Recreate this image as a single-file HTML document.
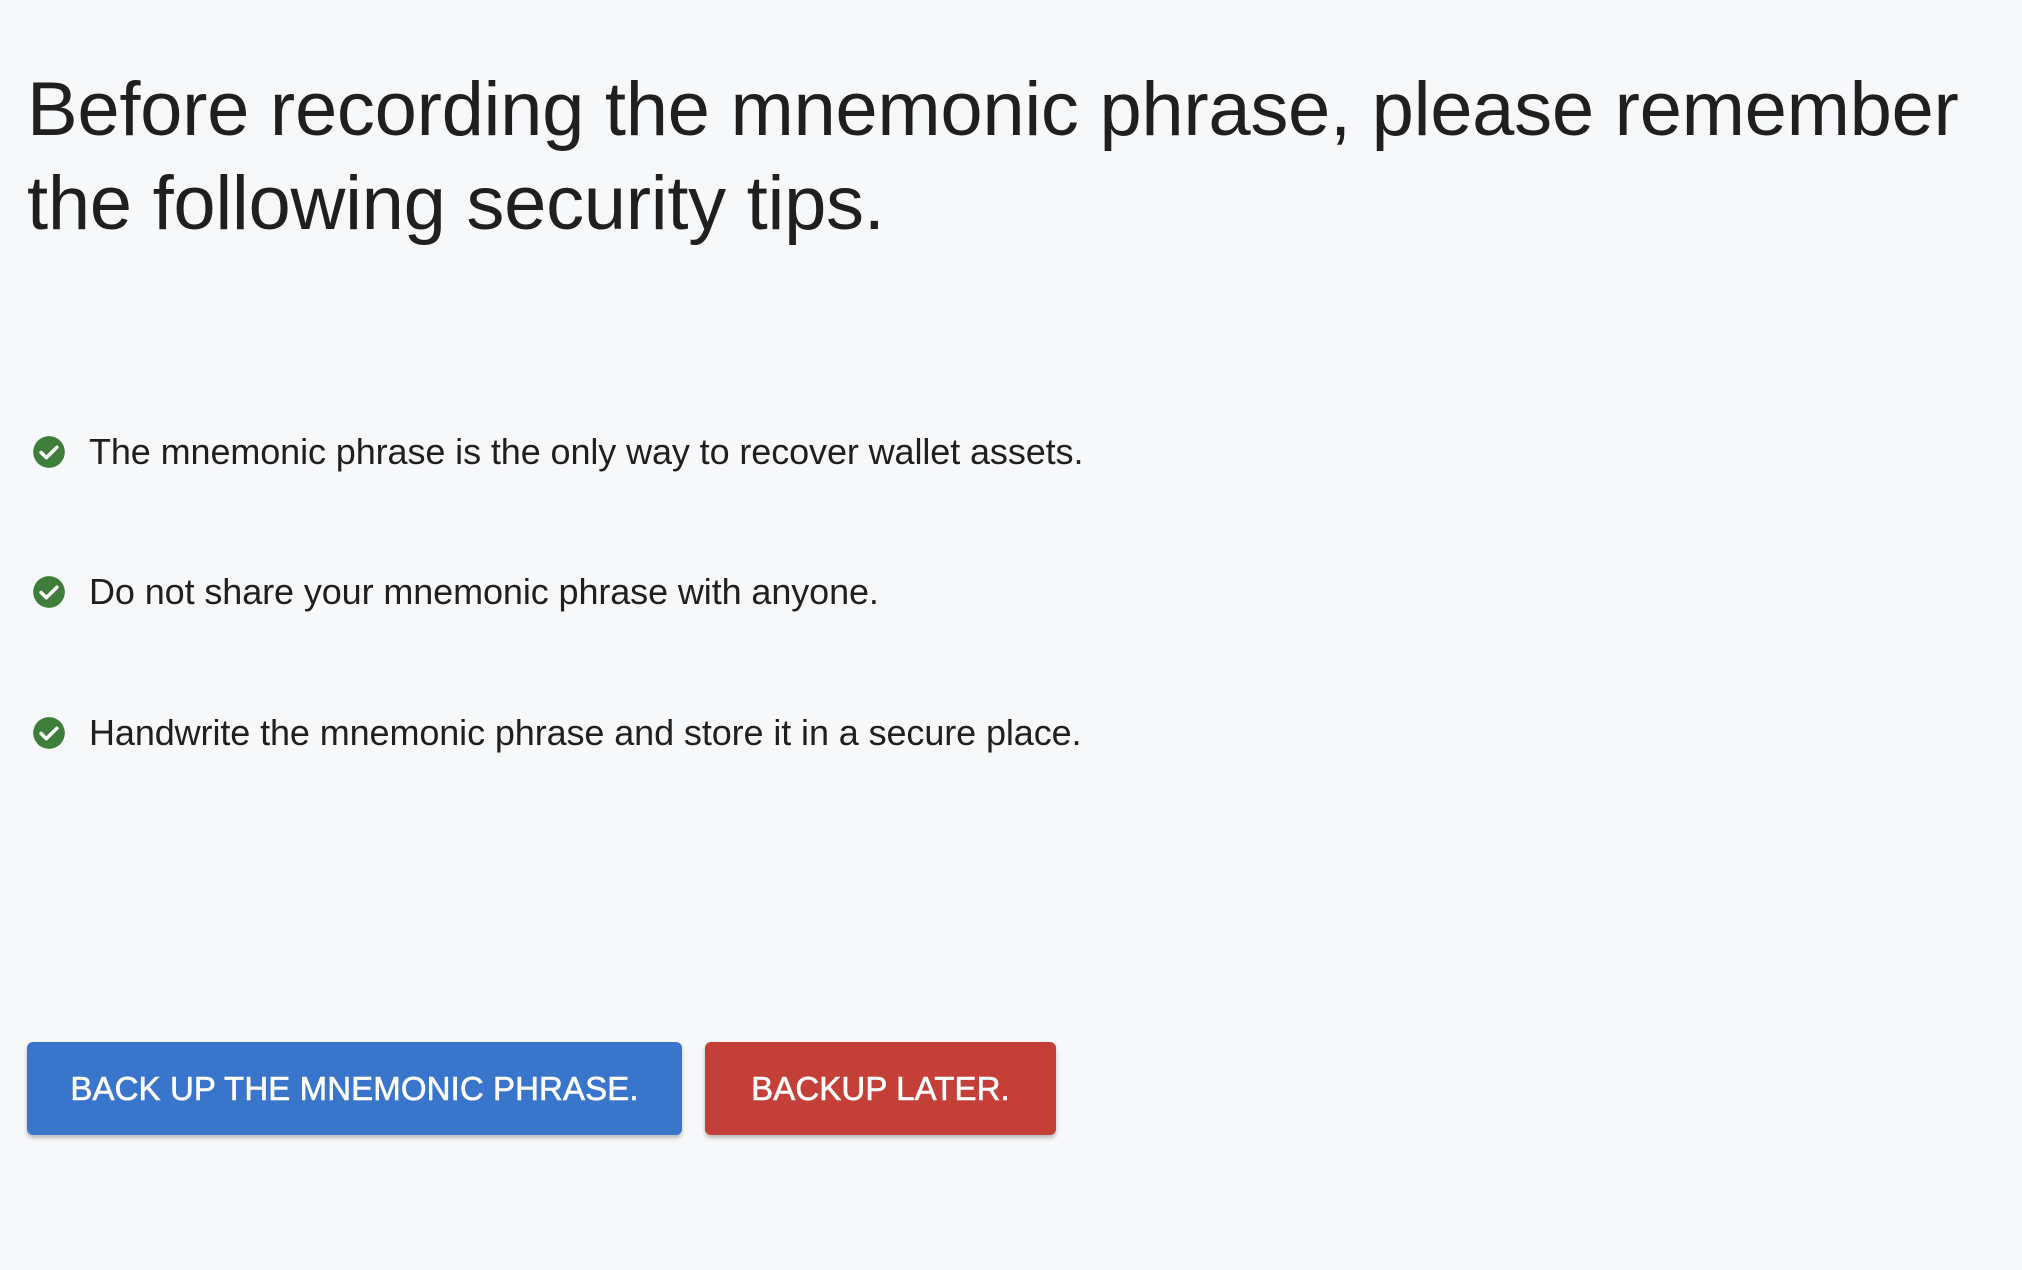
<!DOCTYPE html>
<html><head><meta charset="utf-8"><style>
html,body{margin:0;padding:0;background:#f7f8fa;width:2022px;height:1270px;overflow:hidden;font-family:"Liberation Sans",Arial,sans-serif;color:#1f1f1f}
h1{position:absolute;left:27px;top:63px;margin:0;font-weight:400;font-size:76px;line-height:94px;width:1995px;letter-spacing:-0.3px}
.item{position:absolute;left:30px;height:40px;display:flex;align-items:center}
.item svg{width:38px;height:38px;margin-right:21px}
.item span{font-size:36px;letter-spacing:-0.1px}
.btn{position:absolute;top:1042px;height:93px;border-radius:6px;color:#fff;font-size:33px;font-weight:400;-webkit-text-stroke:0.6px #fff;letter-spacing:0.1px;display:flex;align-items:center;justify-content:center;box-shadow:0 3px 4px rgba(0,0,0,.25)}
</style></head><body>
<h1>Before recording the mnemonic phrase, please remember the following security tips.</h1>
<div class="item" style="top:432px"><svg viewBox="0 0 24 24"><circle cx="12" cy="12" r="10" fill="#3f7d3a"/><path d="M7 12.3l3.3 3.3L17 9" stroke="#fff" stroke-width="2.2" fill="none" stroke-linecap="round" stroke-linejoin="round"/></svg><span>The mnemonic phrase is the only way to recover wallet assets.</span></div>
<div class="item" style="top:572px"><svg viewBox="0 0 24 24"><circle cx="12" cy="12" r="10" fill="#3f7d3a"/><path d="M7 12.3l3.3 3.3L17 9" stroke="#fff" stroke-width="2.2" fill="none" stroke-linecap="round" stroke-linejoin="round"/></svg><span>Do not share your mnemonic phrase with anyone.</span></div>
<div class="item" style="top:713px"><svg viewBox="0 0 24 24"><circle cx="12" cy="12" r="10" fill="#3f7d3a"/><path d="M7 12.3l3.3 3.3L17 9" stroke="#fff" stroke-width="2.2" fill="none" stroke-linecap="round" stroke-linejoin="round"/></svg><span>Handwrite the mnemonic phrase and store it in a secure place.</span></div>
<div class="btn" style="left:27px;width:655px;background:#3a75cc">BACK UP THE MNEMONIC PHRASE.</div>
<div class="btn" style="left:705px;width:351px;background:#c33f38">BACKUP LATER.</div>
</body></html>
